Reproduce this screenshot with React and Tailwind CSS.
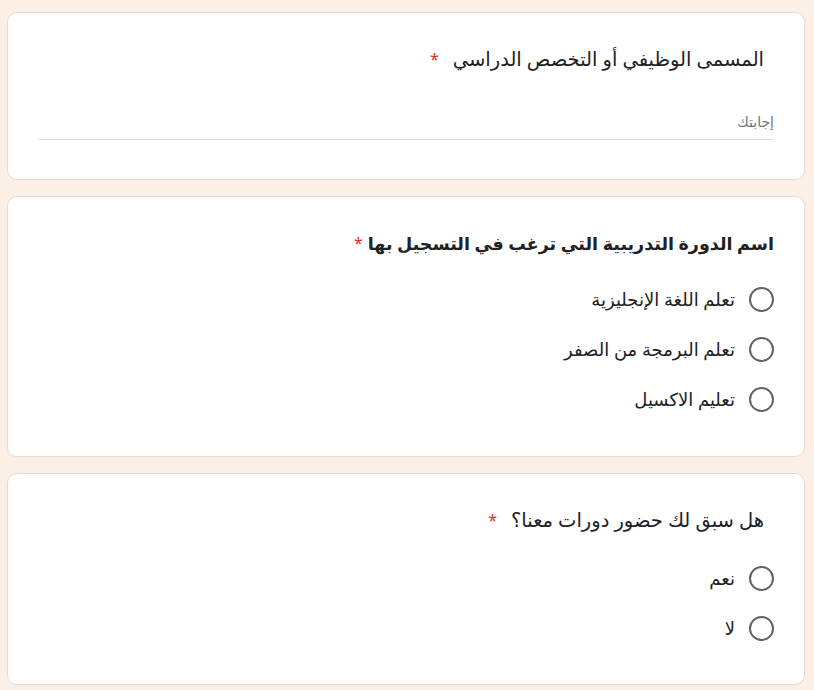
import React, { useState } from 'react';

const font = { fontFamily: '"Noto Sans", "DejaVu Sans", sans-serif' };

function Radio({ label, checked, onSelect }) {
  return (
    <label className="flex items-center gap-[14px] h-[24px] cursor-pointer" onClick={onSelect}>
      <span className="w-[25px] h-[25px] rounded-full border-2 border-[#5f6368] flex items-center justify-center shrink-0">
        {checked && <span className="w-[12px] h-[12px] rounded-full bg-[#5f6368]" />}
      </span>
      <span className="text-[18px] text-[#202124]">{label}</span>
    </label>
  );
}

export default function App() {
  const [course, setCourse] = useState(null);
  const [before, setBefore] = useState(null);

  const courses = ['تعلم اللغة الإنجليزية', 'تعلم البرمجة من الصفر', 'تعليم الاكسيل'];

  return (
    <div dir="rtl" style={font} className="min-h-[690px] bg-[#fcefe5] pt-[12px] pb-[6px] pr-[9px] pl-[7px] flex flex-col gap-[16px]">
      {/* Job title */}
      <div className="bg-white border border-[#e3dcd6] rounded-[10px] h-[168px] pr-[30px] pl-[30px] pt-[33px]">
        <div className="pr-[10px] flex items-center h-[26px] text-[19.5px] text-[#202124]">
          <span>المسمى الوظيفي أو التخصص الدراسي</span>
          <span className="text-[#d93025] mr-[14px] text-[16px]">*</span>
        </div>
        <div className="mt-[37px] border-b border-[#dadce0] pb-[6px]">
          <input
            placeholder="إجابتك"
            className="w-full text-[14px] text-[#202124] placeholder-[#70757a] outline-none bg-transparent"
          />
        </div>
      </div>

      {/* Course */}
      <div className="bg-white border border-[#e3dcd6] rounded-[10px] h-[261px] pr-[30px] pt-[33px]">
        <div className="flex items-center h-[26px] text-[17.5px] font-bold text-[#202124]">
          <span>اسم الدورة التدريبية التي ترغب في التسجيل بها</span>
          <span className="text-[#d93025] mr-[5px] text-[16px] font-normal">*</span>
        </div>
        <div className="mt-[31px] flex flex-col gap-[26px]">
          {courses.map((c, i) => (
            <Radio key={c} label={c} checked={course === i} onSelect={() => setCourse(i)} />
          ))}
        </div>
      </div>

      {/* Attended before */}
      <div className="bg-white border border-[#e3dcd6] rounded-[10px] h-[212px] pr-[30px] pt-[33px]">
        <div className="pr-[10px] flex items-center h-[26px] text-[19.5px] text-[#202124]">
          <span>هل سبق لك حضور دورات معنا؟</span>
          <span className="text-[#d93025] mr-[14px] text-[16px]">*</span>
        </div>
        <div className="mt-[33px] flex flex-col gap-[26px]">
          <Radio label="نعم" checked={before === 0} onSelect={() => setBefore(0)} />
          <Radio label="لا" checked={before === 1} onSelect={() => setBefore(1)} />
        </div>
      </div>
    </div>
  );
}
